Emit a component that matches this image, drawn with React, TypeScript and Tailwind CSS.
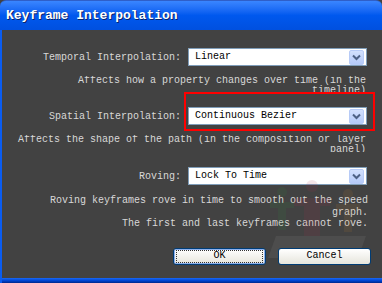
import React from "react";

const mono = { fontFamily: '"Liberation Mono", "DejaVu Sans Mono", monospace' };

const Arrow = () => (
  <div className="w-[15px] h-[15px] mr-[2px] rounded-[2px] border border-[#b7cbf7] bg-gradient-to-b from-[#d2e0fd] to-[#b4c9f8] flex items-center justify-center">
    <svg width="9" height="7" viewBox="0 0 9 7">
      <path d="M1 1.5 L4.5 5 L8 1.5" fill="none" stroke="#4d6185" strokeWidth="2" />
    </svg>
  </div>
);

const Select = ({ value }: { value: string }) => (
  <div className="w-[179px] h-[18px] bg-white border border-[#7f9db9] flex items-center justify-between">
    <span className="pl-[6px] text-[10px] text-black leading-none">{value}</span>
    <Arrow />
  </div>
);

const Row = ({ label, value, mt }: { label: string; value: string; mt: string }) => (
  <div className={`flex items-center h-[18px] ${mt}`}>
    <div className="w-[179px] text-right text-[10px] text-[#d8d8d8] leading-none pt-[1px]">{label}</div>
    <div className="w-[7px]" />
    <Select value={value} />
  </div>
);

const Btn = ({ label, focused }: { label: string; focused?: boolean }) => (
  <div
    className={`w-[93px] h-[17px] rounded-[3px] border border-[#003c74] bg-gradient-to-b from-white to-[#e6e5dc] flex items-center justify-center ${
      focused ? "shadow-[inset_0_0_0_1px_#8db2f0]" : ""
    }`}
  >
    <div
      className={`w-[85px] h-[11px] flex items-center justify-center text-[10px] text-black leading-none ${
        focused ? "outline outline-1 outline-dotted outline-[#333]" : ""
      }`}
    >
      {label}
    </div>
  </div>
);

// faint watermark figures behind the lower right corner
const Watermark = () => (
  <svg width="110" height="80" viewBox="0 0 110 80" className="opacity-[0.12]">
    <circle cx="18" cy="12" r="5" fill="#2f8a3a" />
    <path d="M6 22 h24 v6 h-8 v22 h-8 v-22 h-8z" fill="#2f8a3a" />
    <circle cx="48" cy="6" r="6" fill="#b0304a" />
    <path d="M30 18 h36 v8 h-10 v34 h-16 v-34 h-10z" fill="#b0304a" />
    <circle cx="84" cy="14" r="5" fill="#c07a2a" />
    <path d="M72 24 h24 v6 h-8 v22 h-8 v-22 h-8z" fill="#c07a2a" />
    <path d="M4 78 l8 -22 h90 l-8 22z" fill="#9a9a9a" />
  </svg>
);

export default function App() {
  return (
    <div className="w-[382px] h-[283px] bg-[#424242] flex flex-col relative overflow-hidden" style={mono}>
      <div className="h-[30px] rounded-t-[6px] bg-gradient-to-b from-[#3a86ff] via-[#0058ee] to-[#0050df] border-t border-[#2f5fc8] flex items-center pl-[6px]">
        <span className="text-white font-bold text-[13px] leading-none [text-shadow:1px_1px_0_#0a246a]">
          Keyframe Interpolation
        </span>
      </div>

      <div className="flex-1 flex flex-col border-l-2 border-[#0a5cf0] relative">
        <div className="absolute left-[262px] top-[150px] pointer-events-none">
          <Watermark />
        </div>

        <Row label="Temporal Interpolation:" value="Linear" mt="mt-[18px]" />
        <div className="mt-[10px] h-[17px] overflow-hidden w-[364px] text-right text-[10px] leading-[10px] text-[#d8d8d8]">
          Affects how a property changes over time (in the
          <br />
          timeline)
        </div>

        <Row label="Spatial Interpolation:" value="Continuous Bezier" mt="mt-[14px]" />
        <div className="mt-[10px] h-[17px] overflow-hidden w-[364px] text-right text-[10px] leading-[10px] text-[#d8d8d8]">
          Affects the shape of the path (in the composition or layer
          <br />
          panel)
        </div>

        <Row label="Roving:" value="Lock To Time" mt="mt-[15px]" />
        <div className="mt-[10px] w-[366px] text-right text-[10px] leading-[11.5px] text-[#d8d8d8]">
          Roving keyframes rove in time to smooth out the speed
          <br />
          graph.
          <br />
          The first and last keyframes cannot rove.
        </div>

        <div className="mt-[18px] flex justify-end gap-[12px] pr-[11px] relative">
          <Btn label="OK" focused />
          <Btn label="Cancel" />
        </div>

        <div className="flex-1" />
        <div className="h-[5px] bg-gradient-to-b from-[#1a68f5] via-[#0046d6] to-[#00288c]" />

        <div className="absolute left-[182px] top-[62px] w-[191px] h-[39px] border-2 border-[#ff0000]" />
      </div>
    </div>
  );
}
